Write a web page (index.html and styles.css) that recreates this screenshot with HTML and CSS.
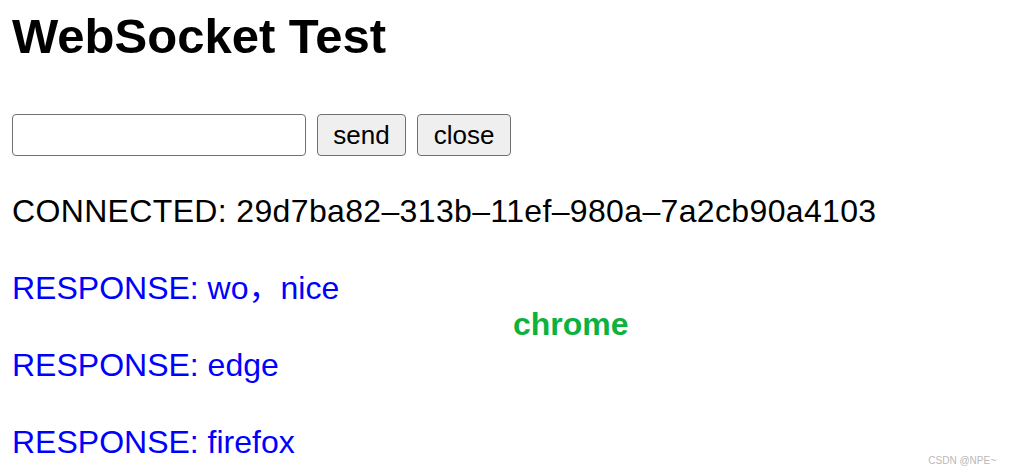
FILE: index.html
```html
<!DOCTYPE html>
<html>
<head>
<meta charset="utf-8">
<title>WebSocket Test</title>
<link rel="stylesheet" href="styles.css">
</head>
<body>
<div class="page">
  <h1 class="title">WebSocket Test</h1>
  <div class="controls">
    <input class="msg" type="text">
    <button class="btn btn-send">send</button>
    <button class="btn btn-close">close</button>
  </div>
  <div class="log">
    <p class="line conn">CONNECTED: 29d7ba82–313b–11ef–980a–7a2cb90a4103</p>
    <p class="line resp">RESPONSE: wo，nice</p>
    <p class="line resp">RESPONSE: edge</p>
    <p class="line resp">RESPONSE: firefox</p>
  </div>
  <div class="note">chrome</div>
  <div class="mark">CSDN @NPE~</div>
</div>
</body>
</html>
```

FILE: styles.css
```css
html, body {
  margin: 0;
  padding: 0;
  background: #fff;
}
body {
  width: 1010px;
  height: 474px;
  overflow: hidden;
  font-family: "Liberation Sans", Arial, "Noto Sans CJK SC", sans-serif;
  color: #000;
}
.page {
  position: relative;
  height: 474px;
  padding: 12px 12px 0 12px;
  box-sizing: border-box;
}
.title {
  margin: 0;
  font-size: 49px;
  line-height: 49px;
  font-weight: bold;
}
.controls {
  margin-top: 53px;
  display: flex;
  align-items: center;
  gap: 11px;
  height: 42px;
}
.msg {
  box-sizing: border-box;
  width: 294px;
  height: 42px;
  margin: 0;
  border: 1.5px solid #707070;
  border-radius: 4px;
  background: #fff;
  font-size: 24px;
  padding: 0 6px;
}
.btn {
  box-sizing: border-box;
  height: 42px;
  margin: 0;
  padding: 0 14px;
  border: 1.5px solid #707070;
  border-radius: 4px;
  background: #efefef;
  font-family: "Liberation Sans", Arial, sans-serif;
  font-size: 26px;
  color: #000;
}
.btn-send { width: 89px; }
.btn-close { width: 94px; }
.log {
  margin-top: 35px;
}
.line {
  margin: 0;
  font-size: 32px;
  line-height: 40px;
  white-space: nowrap;
}
.line + .line {
  margin-top: 37px;
}
.conn {
  letter-spacing: 0.35px;
}
.resp {
  color: #0000ff;
}
.note {
  position: absolute;
  left: 513px;
  top: 304px;
  font-size: 32px;
  line-height: 40px;
  font-weight: bold;
  color: #0bb33e;
}
.mark {
  position: absolute;
  right: 14px;
  top: 455px;
  font-size: 10px;
  line-height: 12px;
  color: #b8b8b8;
}
```
